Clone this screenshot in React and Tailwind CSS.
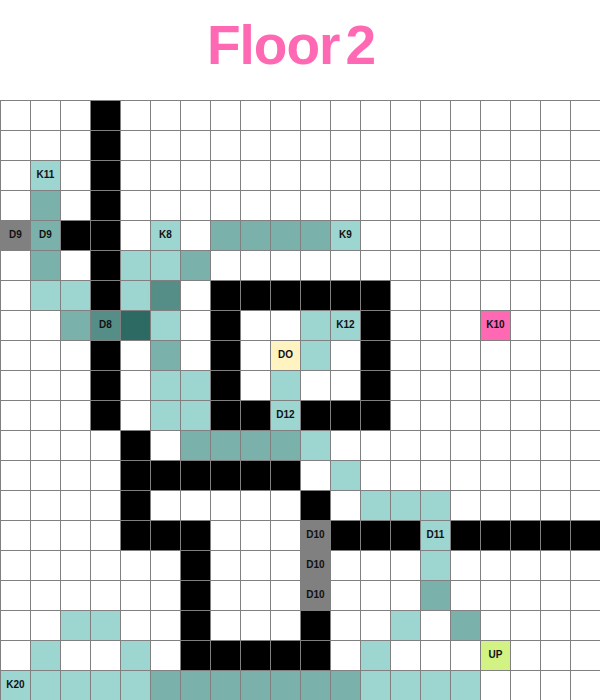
import React from 'react';

// one char per cell: . empty, # wall, g door, l/m/d/x teal shades, p pink, c cream, u lime
const rows = [
  '...#................',
  '...#................',
  '.l.#................',
  '.m.#................',
  'gm##.l.mmmml........',
  '.m.#llm.............',
  '.ll#ld.######.......',
  '..mdxl.#..ll#...p...',
  '...#.m.#.cl.#.......',
  '...#.ll#.l..#.......',
  '...#.ll##l###.......',
  '....#.mmmml.........',
  '....######.l........',
  '....#.....#.lll.....',
  '....###...g###l#####',
  '......#...g...l.....',
  '......#...g...m.....',
  '..ll..#...#..l.m....',
  '.l..l.#####.l...u...',
  'lllllmmmmmmmllll....',
];

const labels = {
  '2-1': 'K11',
  '4-0': 'D9',
  '4-1': 'D9',
  '4-5': 'K8',
  '4-11': 'K9',
  '7-3': 'D8',
  '7-11': 'K12',
  '7-16': 'K10',
  '8-9': 'DO',
  '10-9': 'D12',
  '14-10': 'D10',
  '14-14': 'D11',
  '15-10': 'D10',
  '16-10': 'D10',
  '18-16': 'UP',
  '19-0': 'K20',
};

const cellColors = {
  '.': 'bg-white',
  '#': 'bg-black',
  g: 'bg-[#808080]',
  l: 'bg-[#9dd6d0]',
  m: 'bg-[#7ab1ab]',
  d: 'bg-[#548e87]',
  x: 'bg-[#2e6a64]',
  p: 'bg-[#ff69b4]',
  c: 'bg-[#fff3c2]',
  u: 'bg-[#d2f284]',
};

const App = () => {
  return (
    <div className="w-[600px] h-[700px] overflow-hidden bg-white font-['Liberation_Sans',Arial,sans-serif]">
      {/* Title */}
      <div className="h-[100px] flex justify-center pt-[13px] pr-[18px]">
        <h1 className="text-[55px] leading-[64px] font-bold text-[#ff69b4] tracking-[-1px]">
          Floor<span className="ml-[6px]">2</span>
        </h1>
      </div>

      {/* Map */}
      <div className="grid grid-cols-[repeat(20,30px)] grid-rows-[repeat(20,30px)]">
        {rows.map((row, r) =>
          row.split('').map((c, i) => (
            <div
              key={`${r}-${i}`}
              className={`flex items-center justify-center border-l border-t border-[#808080] pb-[2px] text-[10px] font-bold text-[#111] ${cellColors[c]}`}
            >
              {labels[`${r}-${i}`]}
            </div>
          ))
        )}
      </div>
    </div>
  );
};

export default App;
